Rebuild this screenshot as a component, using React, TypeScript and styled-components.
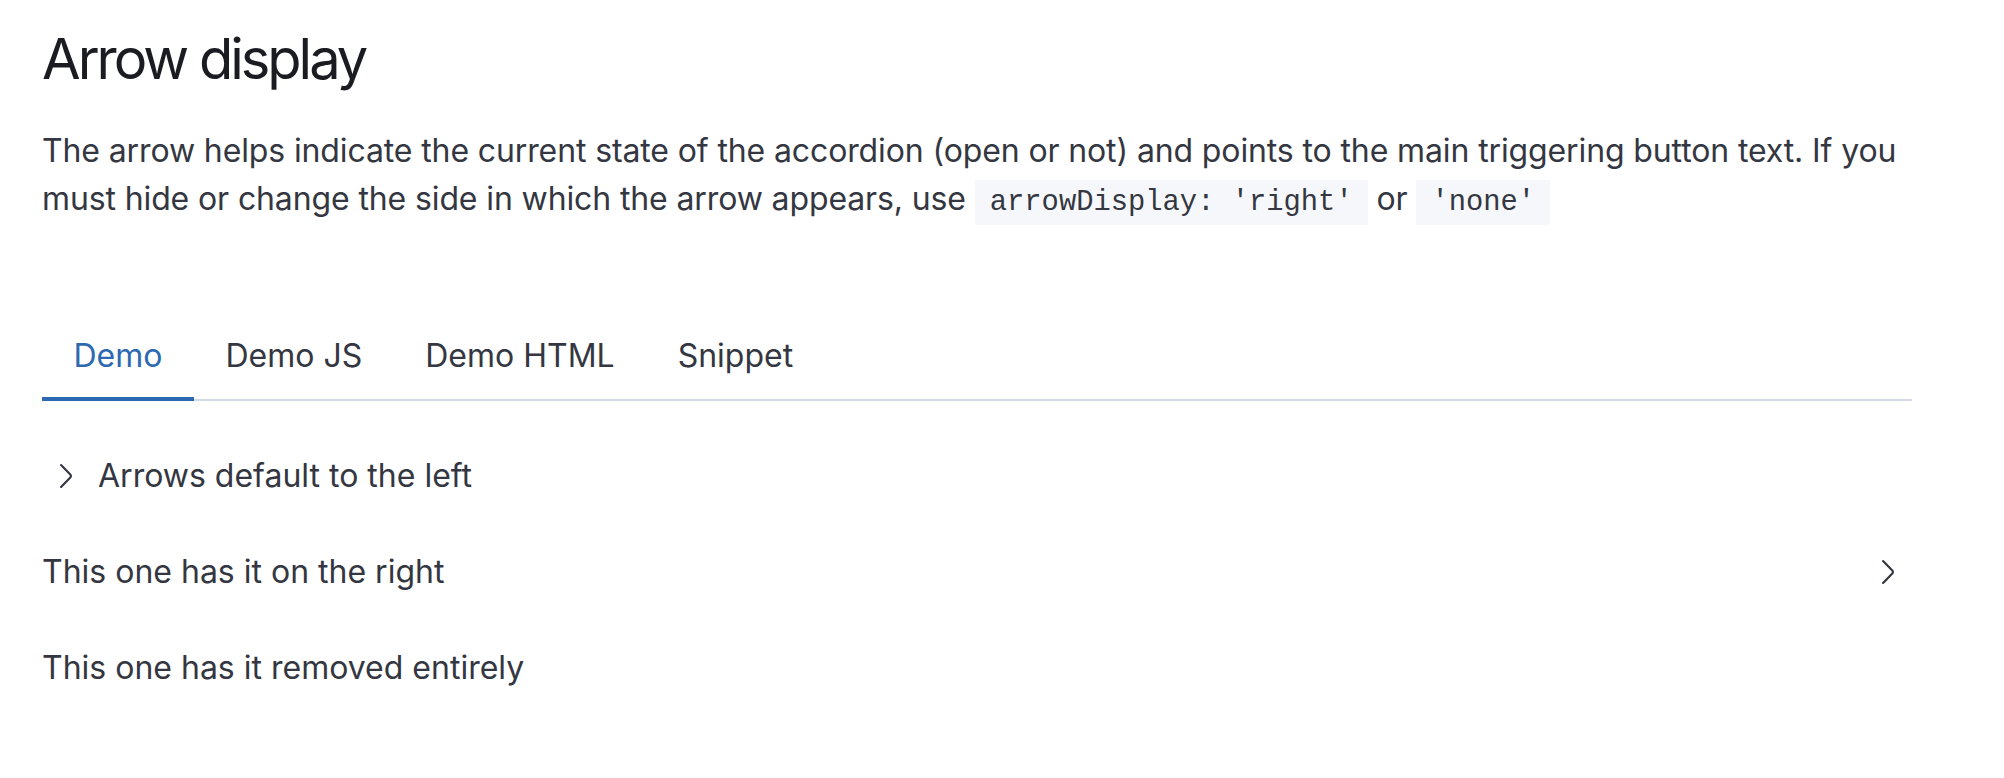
import React, { useState } from 'react';
import styled, { createGlobalStyle } from 'styled-components';

const GlobalStyle = createGlobalStyle`
  html, body {
    margin: 0;
    padding: 0;
    background: #ffffff;
  }
  body {
    font-family: Inter, "Noto Sans", sans-serif;
    color: #343741;
    -webkit-font-smoothing: antialiased;
  }
`;

const Page = styled.div`
  padding: 23px 92px 0 42px;
  width: 1870px;
`;

const Title = styled.h2`
  margin: 0;
  font-size: 56px;
  line-height: 72px;
  font-weight: 400;
  letter-spacing: -3px;
  color: #1a1c21;
`;

const Text = styled.p`
  margin: 32px 0 0;
  font-size: 32px;
  line-height: 48px;
  font-weight: 400;
  letter-spacing: -0.12px;
  color: #343741;
`;

const Code = styled.code`
  font-family: "Liberation Mono", "DejaVu Sans Mono", monospace;
  font-size: 28.8px;
  letter-spacing: 0;
  background: #f5f7fa;
  padding: 6px 15px;
  color: #343741;
`;

const Tabs = styled.div`
  margin-top: 81px;
  display: flex;
  box-shadow: inset 0 -2px 0 #d3dae6;
`;

const Tab = styled.button<{ $selected?: boolean }>`
  border: 0;
  background: none;
  cursor: pointer;
  padding: 24px 31.5px 21px;
  font-family: Inter, "Noto Sans", sans-serif;
  font-size: 32px;
  line-height: 48px;
  font-weight: 400;
  color: ${(p) => (p.$selected ? '#2d69b1' : '#343741')};
  box-shadow: ${(p) => (p.$selected ? 'inset 0 -4px 0 #2d69b1' : 'none')};
`;

const Demo = styled.div`
  padding-top: 51px;
  display: flex;
  flex-direction: column;
  gap: 48px;
`;

const Row = styled.div<{ $right?: boolean }>`
  display: flex;
  align-items: center;
  justify-content: ${(p) => (p.$right ? 'space-between' : 'flex-start')};
  min-height: 48px;
  font-size: 32px;
  line-height: 48px;
  color: #343741;
`;

const ArrowButton = styled.span<{ $side: 'left' | 'right' }>`
  width: 48px;
  height: 48px;
  display: flex;
  align-items: center;
  justify-content: center;
  margin-right: ${(p) => (p.$side === 'left' ? '8px' : '0')};
  margin-left: ${(p) => (p.$side === 'right' ? '8px' : '0')};
`;

function Arrow(): React.JSX.Element {
  return (
    <svg width="32" height="32" viewBox="0 0 16 16" fill="#343741">
      <path d="M5.157 13.069l4.611-4.685a.546.546 0 000-.768L5.158 2.93a.552.552 0 010-.771.53.53 0 01.759 0l4.61 4.684c.631.641.63 1.672 0 2.312l-4.61 4.684a.53.53 0 01-.76 0 .552.552 0 010-.771z" />
    </svg>
  );
}

const tabs = ['Demo', 'Demo JS', 'Demo HTML', 'Snippet'];

export default function App(): React.JSX.Element {
  const [active, setActive] = useState('Demo');
  return (
    <>
      <GlobalStyle />
      <Page>
        <Title>Arrow display</Title>
        <Text>
          The arrow helps indicate the current state of the accordion (open or not) and points to the
          main triggering button text. If you must hide or change the side in which the arrow appears,
          use <Code>arrowDisplay: 'right'</Code> or <Code>'none'</Code>
        </Text>
        <Tabs>
          {tabs.map((t) => (
            <Tab key={t} $selected={t === active} onClick={() => setActive(t)}>
              {t}
            </Tab>
          ))}
        </Tabs>
        <Demo>
          <Row>
            <ArrowButton $side="left">
              <Arrow />
            </ArrowButton>
            Arrows default to the left
          </Row>
          <Row $right>
            This one has it on the right
            <ArrowButton $side="right">
              <Arrow />
            </ArrowButton>
          </Row>
          <Row>This one has it removed entirely</Row>
        </Demo>
      </Page>
    </>
  );
}
